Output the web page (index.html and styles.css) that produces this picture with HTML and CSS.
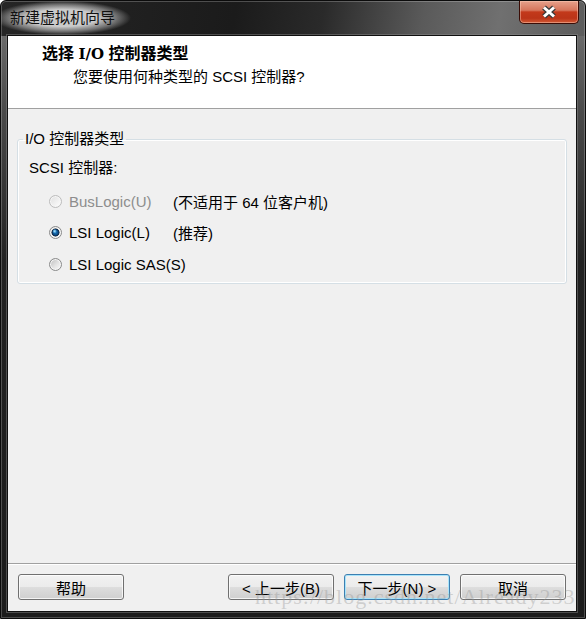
FILE: index.html
```html
<!DOCTYPE html>
<html lang="zh-CN">
<head>
<meta charset="utf-8">
<title>新建虚拟机向导</title>
<link rel="stylesheet" href="styles.css">
</head>
<body>
<div class="window">
  <div class="titlebar">
    <span class="title-text">新建虚拟机向导</span>
    <button class="close" aria-label="关闭">
      <svg width="16" height="14" viewBox="0 0 16 14">
        <path d="M3 2.5 L13 11.5 M13 2.5 L3 11.5" stroke="#3a3a3a" stroke-width="5.5" fill="none"/>
        <path d="M3 2.5 L13 11.5 M13 2.5 L3 11.5" stroke="#ffffff" stroke-width="3" fill="none"/>
      </svg>
    </button>
  </div>
  <div class="client">
    <div class="header">
      <div class="h-title">选择 <span class="io">I/O</span> 控制器类型</div>
      <div class="h-sub">您要使用何种类型的 SCSI 控制器?</div>
    </div>
    <div class="body">
      <fieldset class="group">
        <legend>I/O 控制器类型</legend>
        <div class="sub-label">SCSI 控制器:</div>
        <div class="options">
          <div class="opt disabled">
            <span class="choice"><span class="radio"></span>BusLogic(U)</span>
            <span class="note">(不适用于 64 位客户机)</span>
          </div>
          <div class="opt">
            <span class="choice"><span class="radio checked"></span>LSI Logic(L)</span>
            <span class="note">(推荐)</span>
          </div>
          <div class="opt">
            <span class="choice"><span class="radio"></span>LSI Logic SAS(S)</span>
          </div>
        </div>
      </fieldset>
    </div>
    <div class="footer">
      <button class="btn">帮助</button>
      <span class="spacer"></span>
      <button class="btn">&lt; 上一步(B)</button>
      <button class="btn default">下一步(N) &gt;</button>
      <button class="btn">取消</button>
    </div>
  </div>
  <div class="watermark">https://blog.csdn.net/Already233</div>
</div>
</body>
</html>
```
FILE: styles.css
```css
* { box-sizing: border-box; }
html, body { margin: 0; padding: 0; }
body {
  width: 586px;
  height: 619px;
  overflow: hidden;
  background: #ffffff;
  font-family: "Liberation Sans", "Noto Sans CJK SC", sans-serif;
  font-size: 15px;
  color: #000;
}
.window {
  position: relative;
  width: 586px;
  height: 619px;
  display: flex;
  flex-direction: column;
  padding: 0 8px 6px 6px;
  border: 1px solid #0b0b0b;
  border-radius: 6px 6px 0 0;
  overflow: hidden;
  background:
    linear-gradient(100deg, #262626 0%, #1b1b1b 40%, #2a2a2a 55%, #5a5a5a 72%, #707070 85%, #5c5c5c 100%) top left / 100% 35px no-repeat,
    linear-gradient(180deg, #6a6a6a 35px, #4a4a4a 110px, #222222 260px, #1c1c1c 100%);
  box-shadow: inset 0 0 0 1px rgba(255,255,255,0.22);
}
.titlebar {
  height: 34px;
  display: flex;
  align-items: center;
  flex: none;
}
.title-text {
  margin-left: -13px;
  padding: 7px 16px;
  line-height: 20px;
  color: #111;
  background: radial-gradient(closest-side, rgba(212,212,212,0.95) 50%, rgba(200,200,200,0.5) 78%, rgba(200,200,200,0) 100%);
  white-space: nowrap;
}
.close {
  align-self: flex-start;
  margin-left: auto;
  margin-right: -2px;
  width: 60px;
  height: 23px;
  padding: 0;
  border: 1px solid #3a0c05;
  border-top: 0;
  border-radius: 0 0 5px 5px;
  background: linear-gradient(180deg, #e6a08b 0%, #d6765c 42%, #c3391b 50%, #bb3418 78%, #d25a35 100%);
  box-shadow: inset 0 0 0 1px rgba(255,210,190,0.45);
  display: flex;
  align-items: center;
  justify-content: center;
}
.client {
  flex: 1;
  display: flex;
  flex-direction: column;
  background: #f0f0f0;
  border: 1px solid #101010;
  box-shadow: 0 0 0 1px rgba(140,140,140,0.45);
}
.header {
  height: 73px;
  flex: none;
  background: #ffffff;
  border-bottom: 1px solid #a0a0a0;
  padding: 8px 0 0 34px;
}
.h-title {
  font-size: 16px;
  font-weight: bold;
  line-height: 20px;
}
.h-title .io {
  font-family: "DejaVu Serif", "Liberation Serif", serif;
  font-size: 15px;
}
.h-sub {
  margin: 2px 0 0 31px;
  line-height: 22px;
}
.body {
  flex: 1;
  padding: 20px 9px 0 9px;
}
.group {
  margin: 0;
  padding: 0 0 9px 0;
  border: 1px solid #d5dfe5;
  border-radius: 3px;
  box-shadow: inset 0 0 0 1px #ffffff;
}
.group legend {
  margin-left: 5px;
  padding: 0 2px;
  line-height: 20px;
}
.sub-label {
  margin-top: 9px;
  padding-left: 11px;
  line-height: 20px;
}
.options {
  margin-top: 13px;
  display: flex;
  flex-direction: column;
  gap: 11.5px;
}
.opt {
  height: 20px;
  display: flex;
  align-items: center;
  padding-left: 31px;
  white-space: nowrap;
}
.choice {
  width: 124px;
  display: flex;
  align-items: center;
  gap: 7px;
}
.opt.disabled .choice { color: #8d8d8d; }
.radio {
  flex: none;
  width: 13px;
  height: 13px;
  border-radius: 50%;
  border: 1px solid #8a8b8b;
  background: linear-gradient(135deg, #c4c4c4 10%, #e4e4e4 55%, #f7f7f7 90%);
  box-shadow: inset 0 0 0 1px #f6f6f6;
}
.radio.checked {
  background:
    radial-gradient(circle at 42% 38%, rgba(200,240,255,0.95) 0, rgba(110,195,245,0.7) 1.2px, rgba(110,195,245,0) 2.2px),
    radial-gradient(circle at 50% 50%, #1d78c0 0, #10558f 2.2px, #0a2e58 3.3px, #2b3846 3.8px, rgba(255,255,255,0) 4.3px),
    linear-gradient(135deg, #d0d0d0 10%, #eeeeee 55%, #fafafa 90%);
}
.opt.disabled .radio {
  border-color: #bcbcbc;
  background: linear-gradient(135deg, #e2e2e2 10%, #f0f0f0 55%, #fbfbfb 90%);
}
.footer {
  flex: none;
  display: flex;
  gap: 10px;
  padding: 10px 10px 11px 10px;
  border-top: 1px solid #a0a0a0;
  box-shadow: inset 0 1px 0 #ffffff;
}
.spacer { flex: 1; }
.btn {
  width: 106px;
  height: 26px;
  padding: 0;
  font-family: inherit;
  font-size: 15px;
  color: #000;
  border: 1px solid #707070;
  border-radius: 3px;
  background: linear-gradient(180deg, #f2f2f2 0%, #ebebeb 49%, #dddddd 51%, #cfcfcf 100%);
  box-shadow: inset 0 0 0 1px rgba(255,255,255,0.75);
}
.btn.default {
  border-color: #3c7fb1;
  box-shadow: inset 0 0 0 1px #a8e4fb;
}
.watermark {
  position: absolute;
  left: 254px;
  top: 585px;
  font-family: "Liberation Serif", serif;
  font-size: 22px;
  line-height: 22px;
  letter-spacing: 1px;
  color: rgba(150,150,150,0.38);
  white-space: nowrap;
  pointer-events: none;
}
```
